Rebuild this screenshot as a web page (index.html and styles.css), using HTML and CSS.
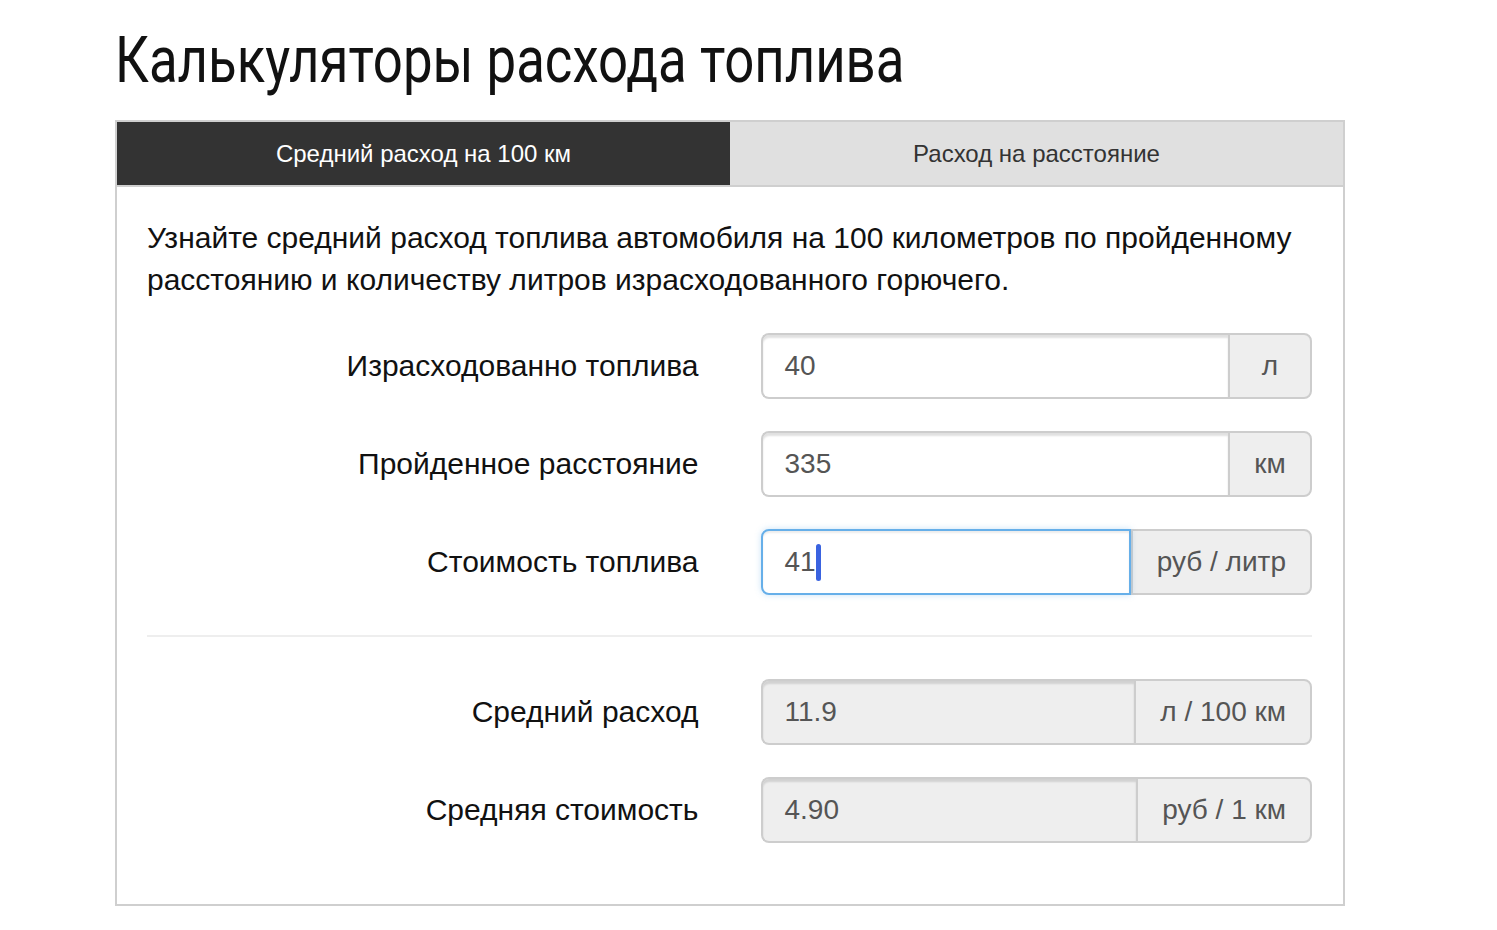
FILE: index.html
```html
<!DOCTYPE html>
<html lang="ru">
<head>
<meta charset="utf-8">
<title>Калькуляторы расхода топлива</title>
<link rel="stylesheet" href="styles.css">
</head>
<body>
<div class="page">
  <h1 class="title"><span class="title-text">Калькуляторы расхода топлива</span></h1>
  <div class="card">
    <div class="tabs">
      <div class="tab tab-active">Средний расход на 100 км</div>
      <div class="tab">Расход на расстояние</div>
    </div>
    <div class="card-body">
      <p class="lead">Узнайте средний расход топлива автомобиля на 100 километров по пройденному расстоянию и количеству литров израсходованного горючего.</p>
      <div class="form">
        <div class="row">
          <div class="label">Израсходованно топлива</div>
          <div class="group">
            <div class="field">40</div>
            <div class="addon">л</div>
          </div>
        </div>
        <div class="row">
          <div class="label">Пройденное расстояние</div>
          <div class="group">
            <div class="field">335</div>
            <div class="addon">км</div>
          </div>
        </div>
        <div class="row">
          <div class="label">Стоимость топлива</div>
          <div class="group">
            <div class="field field-focus">41<span class="caret"></span></div>
            <div class="addon">руб / литр</div>
          </div>
        </div>
      </div>
      <hr class="divider">
      <div class="form">
        <div class="row">
          <div class="label">Средний расход</div>
          <div class="group">
            <div class="field field-disabled">11.9</div>
            <div class="addon">л / 100 км</div>
          </div>
        </div>
        <div class="row">
          <div class="label">Средняя стоимость</div>
          <div class="group">
            <div class="field field-disabled">4.90</div>
            <div class="addon">руб / 1 км</div>
          </div>
        </div>
      </div>
    </div>
  </div>
</div>
</body>
</html>
```
FILE: styles.css
```css
* { box-sizing: border-box; }
html, body { margin: 0; padding: 0; background: #fff; }
body {
  font-family: "Liberation Sans", Arial, sans-serif;
  color: #111;
}
.page {
  width: 1230px;
  margin-left: 115px;
  padding-top: 24px;
}
.title {
  margin: 0 0 22px 0;
  font-family: Roboto, "Liberation Sans", sans-serif;
  font-weight: 400;
  font-size: 64px;
  line-height: 74px;
  color: #111;
  white-space: nowrap;
}
.title-text {
  display: inline-block;
  transform: scaleX(0.824);
  transform-origin: left center;
}
.card {
  border: 2px solid #cfcfcf;
  background: #fff;
}
.tabs {
  display: grid;
  grid-template-columns: 1fr 1fr;
  border-bottom: 2px solid #cfcfcf;
}
.tab {
  height: 63px;
  display: flex;
  align-items: center;
  justify-content: center;
  font-size: 24px;
  background: #e0e0e0;
  color: #333;
}
.tab-active {
  background: #333;
  color: #fff;
}
.card-body {
  padding: 30px 31px 61px 30px;
}
.lead {
  margin: 0 0 32px 0;
  font-size: 30px;
  letter-spacing: 0;
  line-height: 42px;
  color: #111;
}
.form {
  display: flex;
  flex-direction: column;
  gap: 32px;
}
.row {
  display: grid;
  grid-template-columns: 1fr 1fr;
  column-gap: 62px;
  align-items: center;
}
.label {
  text-align: right;
  font-size: 30px;
  color: #111;
}
.group {
  display: flex;
  height: 66px;
}
.field {
  flex: 1;
  display: flex;
  align-items: center;
  padding-left: 22px;
  font-size: 28px;
  color: #555;
  border: 2px solid #cdcdcd;
  border-right: 0;
  border-radius: 8px 0 0 8px;
  background: #fff;
  box-shadow: inset 0 3px 2px rgba(0,0,0,0.12);
}
.field-focus {
  border: 2px solid #66afe9;
  box-shadow: inset 0 2px 2px rgba(0,0,0,0.08), 0 0 6px rgba(102,175,233,0.35);
  position: relative;
  z-index: 1;
}
.field-disabled {
  background: #eeeeee;
}
.caret {
  display: inline-block;
  width: 5px;
  height: 37px;
  border-radius: 3px;
  background: #3a63e0;
}
.addon {
  min-width: 84px;
  padding: 0 24px;
  display: flex;
  align-items: center;
  justify-content: center;
  white-space: nowrap;
  font-size: 28px;
  color: #555;
  background: #eeeeee;
  border: 2px solid #cdcdcd;
  border-radius: 0 8px 8px 0;
}
.divider {
  margin: 40px 0 42px 0;
  border: 0;
  border-top: 2px solid #eeeeee;
}
```
